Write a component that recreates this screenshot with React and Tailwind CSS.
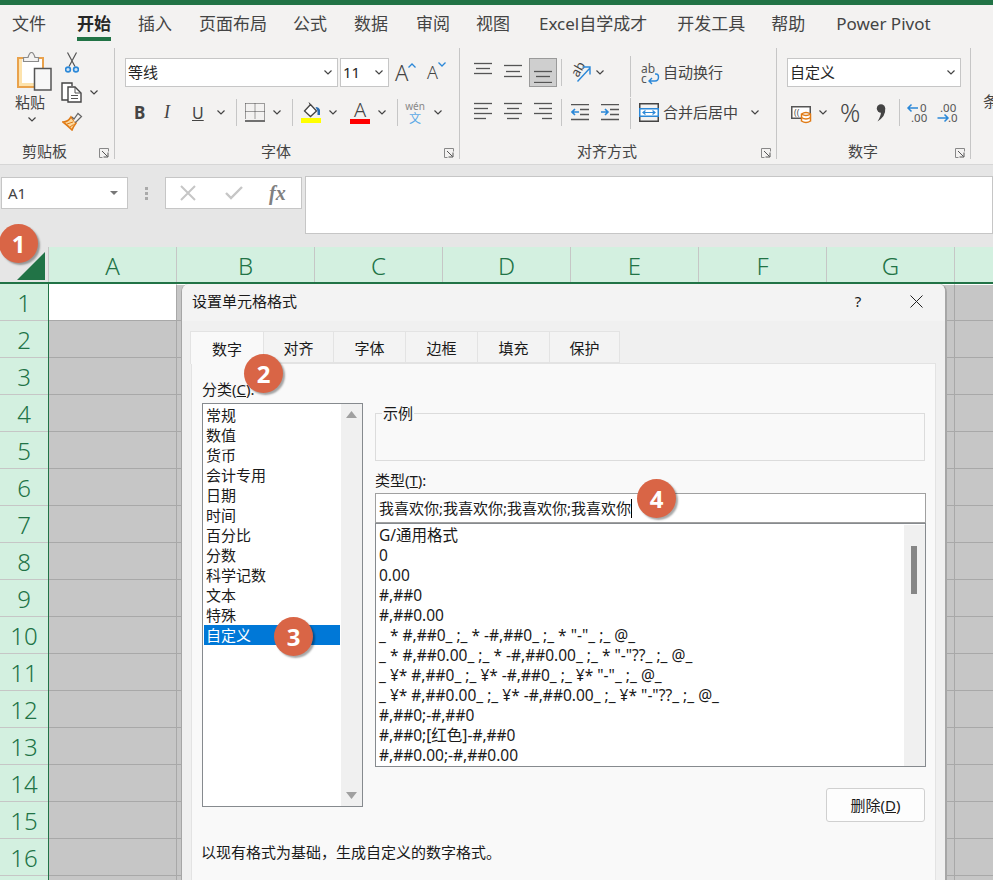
import React from 'react';

const tabs = [
  ['文件', 'ml-[12px]'],
  ['开始', 'ml-[31px] font-bold text-[#262626] border-b-[4px] border-[#217346]'],
  ['插入', 'ml-[27px]'],
  ['页面布局', 'ml-[27px]'],
  ['公式', 'ml-[26px]'],
  ['数据', 'ml-[27px]'],
  ['审阅', 'ml-[28px]'],
  ['视图', 'ml-[26px]'],
  ['Excel自学成才', 'ml-[29px]'],
  ['开发工具', 'ml-[30px]'],
  ['帮助', 'ml-[26px]'],
  ['Power Pivot', 'ml-[31px]'],
];

const columns = [
  ['A', 'w-[128px]'],
  ['B', 'w-[138px]'],
  ['C', 'w-[128px]'],
  ['D', 'w-[128px]'],
  ['E', 'w-[128px]'],
  ['F', 'w-[128px]'],
  ['G', 'w-[128px]'],
  ['', 'w-[60px]'],
];

const rows = Array.from({ length: 17 }, (_, i) => i + 1);

const categories = ['常规', '数值', '货币', '会计专用', '日期', '时间', '百分比', '分数', '科学记数', '文本', '特殊', '自定义'];

const formats = [
  'G/通用格式',
  '0',
  '0.00',
  '#,##0',
  '#,##0.00',
  '_ * #,##0_ ;_ * -#,##0_ ;_ * "-"_ ;_ @_',
  '_ * #,##0.00_ ;_ * -#,##0.00_ ;_ * "-"??_ ;_ @_',
  '_ ¥* #,##0_ ;_ ¥* -#,##0_ ;_ ¥* "-"_ ;_ @_',
  '_ ¥* #,##0.00_ ;_ ¥* -#,##0.00_ ;_ ¥* "-"??_ ;_ @_',
  '#,##0;-#,##0',
  '#,##0;[红色]-#,##0',
  '#,##0.00;-#,##0.00',
];

const dialogTabs = [
  ['数字', 'w-[74px] h-[33px] bg-[#f9f9f9] relative z-10 border-b-0'],
  ['对齐', 'w-[71px] h-[32px] bg-[#f3f3f3]'],
  ['字体', 'w-[73px] h-[32px] bg-[#f3f3f3]'],
  ['边框', 'w-[73px] h-[32px] bg-[#f3f3f3]'],
  ['填充', 'w-[73px] h-[32px] bg-[#f3f3f3]'],
  ['保护', 'w-[71px] h-[32px] bg-[#f3f3f3]'],
];

function Chevron({ className = '' }) {
  return (
    <svg width="8" height="5" viewBox="0 0 8 5" className={`shrink-0 ${className}`}>
      <path d="M0.5 0.5 L4 4 L7.5 0.5" fill="none" stroke="#444" strokeWidth="1.2" />
    </svg>
  );
}

function Sep({ className = '' }) {
  return <div className={`w-px h-[27px] bg-[#c6c6c6] shrink-0 ${className}`} />;
}

function Launcher() {
  return (
    <svg width="10" height="10" viewBox="0 0 10 10" className="absolute right-[5px] bottom-[1px]">
      <path d="M9.5 3.5 V0.5 H0.5 V9.5 H3.5" fill="none" stroke="#888" />
      <path d="M3 3 L8.5 8.5 M9 4.5 V9 H4.5" fill="none" stroke="#555" />
    </svg>
  );
}

// ys are the pixel rows of the lines, xs their start and end
function Lines({ ys, xs, className = '' }) {
  return (
    <svg width="18" height="21" viewBox="0 0 18 21" className={`shrink-0 ${className}`}>
      {ys.map((y, i) => (
        <path key={y} d={`M${xs[i][0]} ${y}.5 H${xs[i][1]}`} stroke="#555" strokeWidth="1.3" fill="none" />
      ))}
    </svg>
  );
}

function PasteIcon() {
  return (
    <svg width="35" height="39" viewBox="0 0 35 39">
      <rect x="1" y="6" width="25" height="29" fill="#fde3ad" stroke="#e9a24c" strokeWidth="2" />
      <rect x="5" y="7" width="20" height="24" fill="#fff" />
      <path d="M6.5 9.5 V5.5 H11 Q12.5 0.5 14.5 0.5 Q16.5 0.5 18 5.5 H21.5 V9.5 Z" fill="#f3f2f1" stroke="#8a8a8a" strokeWidth="1.2" />
      <rect x="17.5" y="16.5" width="16.5" height="21.5" fill="#f7f7f7" stroke="#555" strokeWidth="1.5" />
    </svg>
  );
}

function ScissorsIcon() {
  return (
    <svg width="14" height="21" viewBox="0 0 14 21">
      <path d="M2.5 0.5 L10 14.5 M11.5 0.5 L4 14.5" stroke="#555" strokeWidth="1.2" fill="none" />
      <circle cx="3" cy="17.5" r="2.4" fill="#cfe4f7" stroke="#2b88d8" strokeWidth="1.6" />
      <circle cx="11" cy="17.5" r="2.4" fill="#cfe4f7" stroke="#2b88d8" strokeWidth="1.6" />
    </svg>
  );
}

function CopyIcon() {
  return (
    <svg width="21" height="21" viewBox="0 0 21 21">
      <path d="M7 18 H1 V1 H11 V4" fill="#fff" stroke="#444" strokeWidth="1.4" />
      <path d="M7 5 H14 L20 11 V20 H7 Z" fill="#fff" stroke="#444" strokeWidth="1.4" />
      <path d="M14 5 V11 H20 M10 13.5 H17 M10 16.5 H17" fill="none" stroke="#555" />
    </svg>
  );
}

function BrushIcon() {
  return (
    <svg width="21" height="19" viewBox="0 0 21 19">
      <path d="M1 10 Q6 10 9 5 L14 11 Q11 15 10 18 Q5 13 1 10 Z" fill="#fbd9a0" stroke="#e07b16" strokeWidth="1.6" />
      <path d="M5 12 L11 10 M8 15 L11.5 12.5" stroke="#e07b16" />
      <path d="M10 5 L12 7 L16 1.5 L19.5 4.5 L14.5 9.5 L13 10.5" fill="#f3f2f1" stroke="#666" strokeWidth="1.2" />
    </svg>
  );
}

function BordersIcon() {
  return (
    <svg width="20" height="20" viewBox="0 0 20 20">
      <path d="M0.5 0.5 H19.5 V16.5 M0.5 0.5 V16.5 M10 0.5 V16.5 M0.5 8.5 H19.5" fill="none" stroke="#444" strokeDasharray="1 1" />
      <path d="M0 18 H20" stroke="#444" strokeWidth="1.5" />
    </svg>
  );
}

function FillIcon() {
  return (
    <svg width="20" height="22" viewBox="0 0 20 22">
      <path d="M3.5 9 L9.5 2.5 L15.5 9 L9.5 14.5 Z" fill="#fff" stroke="#444" strokeWidth="1.3" />
      <path d="M8 0.5 L10 4" stroke="#444" />
      <path d="M14.5 5 Q18 5 19 8 V13 H16.5 V9 Z" fill="#2b6cb0" />
      <rect x="0" y="16" width="20" height="5" fill="#ffff00" />
    </svg>
  );
}

function OrientIcon() {
  return (
    <svg width="21" height="22" viewBox="0 0 21 22" className="overflow-visible">
      <text x="8" y="16" fontSize="13" fill="#444" transform="rotate(-60 8 16)">ab</text>
      <path d="M7.5 19.5 L20 6 M12.5 5 H20 V12.5" fill="none" stroke="#2b88d8" strokeWidth="1.4" />
    </svg>
  );
}

function WrapIcon() {
  return (
    <svg width="18" height="22" viewBox="0 0 18 22" className="overflow-visible">
      <text x="0" y="11" fontSize="12" fill="#555">ab</text>
      <text x="0" y="21" fontSize="12" fill="#555">c</text>
      <path d="M14 12 H15 Q17.5 12 17.5 15 Q17.5 19 14 19 H8 M11 16 L8 19 L11 22" fill="none" stroke="#2b88d8" strokeWidth="1.4" />
    </svg>
  );
}

function MergeIcon() {
  return (
    <svg width="20" height="19" viewBox="0 0 20 19">
      <path d="M0 0.75 H20 M0 18.25 H20 M0.75 0 V5 M19.25 0 V5 M0.75 14 V19 M19.25 14 V19" stroke="#444" strokeWidth="1.5" />
      <rect x="0.75" y="5.75" width="18.5" height="7.5" fill="#fff" stroke="#2b88d8" strokeWidth="1.5" />
      <path d="M4 9.5 H16 M6.5 7.5 L4 9.5 L6.5 11.5 M13.5 7.5 L16 9.5 L13.5 11.5" fill="none" stroke="#2b88d8" strokeWidth="1.2" />
    </svg>
  );
}

function IndentIcon({ flip }) {
  return (
    <svg width="18" height="17" viewBox="0 0 18 17">
      <path d="M0 0.5 H18 M0 15.5 H18 M9 5.5 H18 M9 10.5 H18" stroke="#555" strokeWidth="1.3" fill="none" />
      {flip ? (
        <path d="M0 8 H7 M4 5 L7 8 L4 11" stroke="#2b88d8" fill="none" strokeWidth="1.6" />
      ) : (
        <path d="M1 8 H8 M4 5 L1 8 L4 11" stroke="#2b88d8" fill="none" strokeWidth="1.6" />
      )}
    </svg>
  );
}

function CurrencyIcon() {
  return (
    <svg width="20" height="20" viewBox="0 0 20 20" className="overflow-visible">
      <rect x="0.75" y="3.75" width="18.5" height="11.5" fill="#fff" stroke="#555" strokeWidth="1.5" />
      <text x="3" y="12.5" fontSize="9" fill="#555">((</text>
      <path d="M10.5 11 Q15 8 19.5 11 V18 Q15 21 10.5 18 Z" fill="#fff" stroke="#e07b16" strokeWidth="1.5" />
      <path d="M10.5 11 Q15 14 19.5 11 M10.5 14.5 Q15 17.5 19.5 14.5" fill="none" stroke="#e07b16" strokeWidth="1.5" />
    </svg>
  );
}

function CommaIcon() {
  return (
    <svg width="10" height="18" viewBox="0 0 10 18">
      <circle cx="5" cy="4.5" r="4.2" fill="#444" />
      <path d="M9.2 4.5 Q10 12 1.5 17.5 Q5 12 5 8 Z" fill="#444" />
    </svg>
  );
}

function DecimalIcon({ more }) {
  return (
    <svg width="21" height="20" viewBox="0 0 21 20" className="overflow-visible">
      {more ? (
        <>
          <text x="3" y="9" fontSize="11.5" fill="#555">.00</text>
          <text x="11" y="19" fontSize="11.5" fill="#555">.0</text>
          <path d="M0.5 15 H11 M7.5 11.5 L11 15 L7.5 18.5" fill="none" stroke="#2b88d8" strokeWidth="1.5" />
        </>
      ) : (
        <>
          <text x="13" y="9" fontSize="11.5" fill="#555">0</text>
          <text x="4" y="19" fontSize="11.5" fill="#555">.00</text>
          <path d="M1 5 H11 M4.5 1.5 L1 5 L4.5 8.5" fill="none" stroke="#2b88d8" strokeWidth="1.5" />
        </>
      )}
    </svg>
  );
}

function SelectBox({ children, className = '' }) {
  return (
    <div className={`h-[29px] bg-white border border-[#c6c6c6] flex items-center justify-between pl-[2px] pr-[5px] text-[15px] text-[#262626] shrink-0 ${className}`}>
      <span>{children}</span>
      <Chevron />
    </div>
  );
}

function Group({ label, width, labelClass, children }) {
  return (
    <div className={`relative h-[111px] border-r border-[#c6c6c6] shrink-0 flex flex-col ${width}`}>
      {children}
      <div className={`absolute bottom-[-2px] text-[15px] leading-[20px] text-[#444] ${labelClass}`}>{label}</div>
      <Launcher />
    </div>
  );
}

function Badge({ n, className }) {
  return (
    <div className={`absolute z-20 w-[39px] h-[39px] rounded-full bg-[#d96546] text-white font-bold text-[24px] flex items-center justify-center shadow-[2px_2px_2px_rgba(0,0,0,0.35)] ${className}`}>
      {n}
    </div>
  );
}

function Ribbon() {
  return (
    <div className="h-[160px] bg-[#f3f2f1] border-b border-[#d6d6d6] overflow-hidden">
      <div className="flex h-[37px] items-start text-[17px] text-[#444]">
        {tabs.map(([t, cls]) => (
          <div key={t} className={`h-[36px] leading-[37px] shrink-0 ${cls}`}>{t}</div>
        ))}
      </div>
      <div className="flex mt-[6px]">
        <Group label="剪贴板" width="w-[115px]" labelClass="left-[22px]">
          <div className="flex">
            <div className="ml-[17px] mt-[4px] w-[35px] flex flex-col items-start">
              <PasteIcon />
              <div className="text-[15px] leading-[20px] text-[#444] mt-px -ml-[2px]">粘贴</div>
              <Chevron className="mt-[5px] ml-[11px]" />
            </div>
            <div className="ml-[9px] mt-[4px] flex flex-col items-start">
              <div className="ml-[4px]"><ScissorsIcon /></div>
              <div className="flex items-center mt-[9px]">
                <CopyIcon />
                <Chevron className="ml-[8px]" />
              </div>
              <div className="mt-[9px] ml-px"><BrushIcon /></div>
            </div>
          </div>
        </Group>

        <Group label="字体" width="w-[345px]" labelClass="left-[146px]">
          <div className="flex items-center mt-[10px] h-[29px]">
            <SelectBox className="ml-[10px] w-[213px]">等线</SelectBox>
            <SelectBox className="ml-[2px] w-[49px]">11</SelectBox>
            <div className="ml-[6px] w-[24px] flex items-start text-[#444]">
              <span className="text-[22px] leading-[29px] font-light">A</span>
              <svg width="8" height="5" viewBox="0 0 8 5" className="mt-[5px]"><path d="M0.5 4.5 L4 1 L7.5 4.5" fill="none" stroke="#2b88d8" strokeWidth="1.3" /></svg>
            </div>
            <div className="ml-[8px] w-[22px] flex items-start text-[#444]">
              <span className="text-[18px] leading-[31px] font-light">A</span>
              <svg width="8" height="5" viewBox="0 0 8 5" className="mt-[5px]"><path d="M0.5 0.5 L4 4 L7.5 0.5" fill="none" stroke="#2b88d8" strokeWidth="1.3" /></svg>
            </div>
          </div>
          <div className="flex items-center mt-[11px] h-[29px] text-[#444]">
            <span className="ml-[19px] w-[13px] text-[17px] font-bold">B</span>
            <span className="ml-[17px] w-[10px] text-[18px] italic font-['Liberation_Serif',serif]">I</span>
            <span className="ml-[18px] w-[13px] text-[16px] underline">U</span>
            <Chevron className="ml-[12px]" />
            <Sep className="ml-[11px]" />
            <div className="ml-[8px]"><BordersIcon /></div>
            <Chevron className="ml-[8px]" />
            <Sep className="ml-[11px]" />
            <div className="ml-[8px]"><FillIcon /></div>
            <Chevron className="ml-[8px]" />
            <div className="ml-[13px] w-[20px] flex flex-col items-center">
              <span className="text-[20px] leading-[17px] font-light">A</span>
              <div className="w-[20px] h-[5px] bg-[#ff0000] mt-px" />
            </div>
            <Chevron className="ml-[8px]" />
            <Sep className="ml-[11px]" />
            <div className="ml-[7px] w-[20px] flex flex-col items-center">
              <span className="text-[10px] leading-[11px] text-[#888]">wén</span>
              <span className="text-[12px] leading-[13px] text-[#5aa9e6]">文</span>
            </div>
            <Chevron className="ml-[9px]" />
          </div>
        </Group>

        <Group label="对齐方式" width="w-[317px]" labelClass="left-[117px]">
          <div className="flex items-center mt-[10px] h-[29px]">
            <Lines className="ml-[14px]" ys={[1, 6, 11]} xs={[[0, 18], [2, 16], [0, 18]]} />
            <Lines className="ml-[12px]" ys={[3, 9, 14]} xs={[[0, 18], [2, 16], [0, 18]]} />
            <div className="ml-[7px] w-[28px] h-[29px] bg-[#cfcfcf] border border-[#9a9a9a] flex items-center justify-center shrink-0">
              <Lines ys={[9, 14, 20]} xs={[[0, 18], [2, 16], [0, 18]]} />
            </div>
            <Sep className="ml-[4px]" />
            <div className="ml-[8px]"><OrientIcon /></div>
            <Chevron className="ml-[5px]" />
            <div className="ml-[26px] w-px h-[41px] self-start bg-[#c6c6c6] -mt-[2px]" />
            <div className="ml-[10px]"><WrapIcon /></div>
            <span className="ml-[4px] text-[15px] text-[#444]">自动换行</span>
          </div>
          <div className="flex items-center mt-[11px] h-[29px]">
            <Lines className="ml-[14px]" ys={[1, 6, 11, 16]} xs={[[0, 18], [0, 14], [0, 18], [0, 12]]} />
            <Lines className="ml-[12px]" ys={[1, 6, 11, 16]} xs={[[0, 18], [3, 15], [0, 18], [3, 15]]} />
            <Lines className="ml-[12px]" ys={[1, 6, 11, 16]} xs={[[0, 18], [5, 18], [0, 18], [8, 18]]} />
            <Sep className="ml-[9px]" />
            <div className="ml-[9px]"><IndentIcon /></div>
            <div className="ml-[12px]"><IndentIcon flip /></div>
            <div className="ml-[11px] w-px h-[31px] self-start bg-[#c6c6c6]" />
            <div className="ml-[8px]"><MergeIcon /></div>
            <span className="ml-[4px] text-[15px] text-[#444]">合并后居中</span>
            <Chevron className="ml-[13px]" />
          </div>
        </Group>

        <Group label="数字" width="w-[194px]" labelClass="left-[71px]">
          <div className="flex items-center mt-[10px] h-[29px]">
            <SelectBox className="ml-[10px] w-[174px]">自定义</SelectBox>
          </div>
          <div className="flex items-center mt-[11px] h-[29px]">
            <div className="ml-[14px]"><CurrencyIcon /></div>
            <Chevron className="ml-[8px]" />
            <span className="ml-[13px] w-[21px] text-[25px] font-light text-[#444] leading-[29px]">%</span>
            <div className="ml-[15px]"><CommaIcon /></div>
            <Sep className="ml-[13px]" />
            <div className="ml-[7px]"><DecimalIcon /></div>
            <div className="ml-[9px]"><DecimalIcon more /></div>
          </div>
        </Group>

        <div className="ml-[12px] mt-[42px] text-[15px] text-[#444] whitespace-nowrap">条件格式</div>
      </div>
    </div>
  );
}

function FormulaBar() {
  return (
    <div className="h-[82px] bg-[#e6e6e6] flex items-start pt-[12px]">
      <div className="ml-[1px] w-[127px] h-[32px] bg-white border border-[#c6c6c6] flex items-center justify-between pl-[6px] pr-[9px] text-[15px] text-[#444] shrink-0">
        <span>A1</span>
        <svg width="8" height="4" viewBox="0 0 8 4"><path d="M0 0 H8 L4 4 Z" fill="#777" /></svg>
      </div>
      <div className="ml-[16px] w-[4px] h-[32px] flex flex-col items-center justify-center gap-[2px] shrink-0">
        <div className="w-[3px] h-[3px] bg-[#aaa]" />
        <div className="w-[3px] h-[3px] bg-[#aaa]" />
        <div className="w-[3px] h-[3px] bg-[#aaa]" />
      </div>
      <div className="ml-[17px] w-[137px] h-[32px] bg-white border border-[#c6c6c6] flex items-center shrink-0">
        <svg width="16" height="16" viewBox="0 0 16 16" className="ml-[14px]"><path d="M1 1 L15 15 M15 1 L1 15" stroke="#c6c6c6" strokeWidth="2" fill="none" /></svg>
        <svg width="18" height="14" viewBox="0 0 18 14" className="ml-[29px]"><path d="M1 7 L6 12 L17 1" stroke="#c6c6c6" strokeWidth="2.4" fill="none" /></svg>
        <span className="ml-[26px] text-[20px] font-bold italic text-[#808080] font-['Liberation_Serif',serif]">fx</span>
      </div>
      <div className="ml-[3px] flex-1 h-[58px] -mt-[1px] bg-white border border-[#c6c6c6]" />
    </div>
  );
}

function Sheet() {
  return (
    <div className="text-[#217346] text-[24px] font-light">
      <div className="flex h-[35px]">
        <div className="w-[48px] bg-[#e6e6e6] flex items-end justify-end pr-[3px] pb-[2px] shrink-0">
          <svg width="28" height="28" viewBox="0 0 28 28"><path d="M28 0 V28 H0 Z" fill="#217346" /></svg>
        </div>
        <div className="w-px bg-[#c6c6c6] shrink-0" />
        {columns.map(([c, w]) => (
          <div key={c || 'end'} className={`${w} bg-[#d3f0e0] border-r border-[#c6c6c6] pt-[2px] flex items-center justify-center shrink-0`}>{c}</div>
        ))}
      </div>
      <div className="h-[2px] bg-[#217346]" />
      {rows.map((r) => (
        <div key={r} className="flex h-[37px]">
          <div className="w-[48px] bg-[#d3f0e0] border-b border-[#c6c6c6] pt-[2px] flex items-center justify-center shrink-0">{r}</div>
          <div className="w-px bg-[#217346] shrink-0" />
          {columns.map(([c, w]) => (
            <div key={c || 'end'} className={`${w} border-r border-b border-[#a8a8a8] shrink-0 ${r === 1 && c === 'A' ? 'bg-white' : 'bg-[#c6c6c6]'} ${r === 1 ? 'border-t border-t-white' : ''}`} />
          ))}
        </div>
      ))}
    </div>
  );
}

function Dialog() {
  return (
    <div className="absolute left-[181px] top-[284px] w-[766px] h-[600px] rounded-t-[8px] bg-[#f0f0f0] border-r-2 border-l border-[#a6a6a6] text-[15px] text-[#1a1a1a] overflow-hidden">
      <div className="h-[37px] bg-[#f3f3f3] flex items-center pl-[10px] pb-[2px]">
        <span className="flex-1">设置单元格格式</span>
        <span className="w-[12px] text-center">?</span>
        <svg width="13" height="13" viewBox="0 0 13 13" className="ml-[46px] mr-[22px]"><path d="M0.5 0.5 L12.5 12.5 M12.5 0.5 L0.5 12.5" stroke="#222" fill="none" /></svg>
      </div>
      <div className="flex items-start mt-[10px] ml-[8px] h-[32px]">
        {dialogTabs.map(([t, cls]) => (
          <div key={t} className={`flex items-center justify-center border border-[#e3e3e3] -mr-px pt-[2px] shrink-0 ${cls}`}>{t}</div>
        ))}
      </div>
      <div className="ml-[9px] w-[745px] h-[520px] bg-[#f9f9f9] border border-[#e3e3e3]">
        <div className="flex">
          <div className="ml-[10px] w-[161px] shrink-0 mt-[15px]">
            <div className="h-[20px] leading-[20px]">分类(<span className="underline">C</span>):</div>
            <div className="mt-[4px] h-[404px] bg-white border border-[#868a8e] flex">
              <div className="w-[138px] pt-px">
                {categories.map((c, i) => (
                  <div key={c} className={`mx-px h-[20px] leading-[20px] pl-[2px] ${i === 11 ? 'bg-[#0078d7] text-white' : ''}`}>{c}</div>
                ))}
              </div>
              <div className="w-[21px] bg-[#f0f0f0] flex flex-col items-center justify-between py-[7px]">
                <svg width="11" height="7" viewBox="0 0 11 7"><path d="M5.5 0 L11 7 H0 Z" fill="#a0a0a0" /></svg>
                <svg width="11" height="7" viewBox="0 0 11 7"><path d="M0 0 H11 L5.5 7 Z" fill="#a0a0a0" /></svg>
              </div>
            </div>
          </div>
          <div className="ml-[12px] w-[551px] shrink-0 mt-[39px] flex flex-col">
            <fieldset className="h-[58px] border border-[#dcdcdc] mr-px">
              <legend className="ml-[6px] px-[1px] leading-[20px]">示例</legend>
            </fieldset>
            <div className="mt-[9px] h-[20px] leading-[20px]">类型(<span className="underline">T</span>):</div>
            <div className="mt-[3px] h-[30px] bg-white border border-[#a0a0a0] flex items-center pl-[3px]">
              <span className="leading-[19px] border-r border-black">我喜欢你;我喜欢你;我喜欢你;我喜欢你</span>
            </div>
            <div className="h-[244px] bg-white border border-[#868a8e] flex">
              <div className="flex-1 pt-px pl-[3px] whitespace-pre text-[15.5px]">
                {formats.map((f) => (
                  <div key={f} className="h-[20px] leading-[20px]">{f}</div>
                ))}
              </div>
              <div className="w-[21px] mt-px bg-[#f0f0f0] pt-[21px] pl-[7px]">
                <div className="w-[6px] h-[48px] bg-[#868686]" />
              </div>
            </div>
            <div className="mt-[21px] self-end mr-px w-[99px] h-[34px] bg-[#fdfdfd] border border-[#d0d0d0] rounded-[3px] flex items-center justify-center">
              <span>删除(<span className="underline">D</span>)</span>
            </div>
          </div>
        </div>
        <div className="ml-[9px] mt-[20px] h-[20px] leading-[20px]">以现有格式为基础，生成自定义的数字格式。</div>
      </div>
    </div>
  );
}

export default function App() {
  return (
    <div className="relative w-[993px] h-[880px] overflow-hidden bg-[#e6e6e6] font-['Noto_Sans','Noto_Sans_CJK_SC',sans-serif]">
      <div className="h-[5px] bg-[#217346]" />
      <Ribbon />
      <FormulaBar />
      <Sheet />
      <Dialog />
      <Badge n="1" className="left-[-1px] top-[224px]" />
      <Badge n="2" className="left-[244px] top-[354px]" />
      <Badge n="3" className="left-[274px] top-[617px]" />
      <Badge n="4" className="left-[637px] top-[479px]" />
    </div>
  );
}
